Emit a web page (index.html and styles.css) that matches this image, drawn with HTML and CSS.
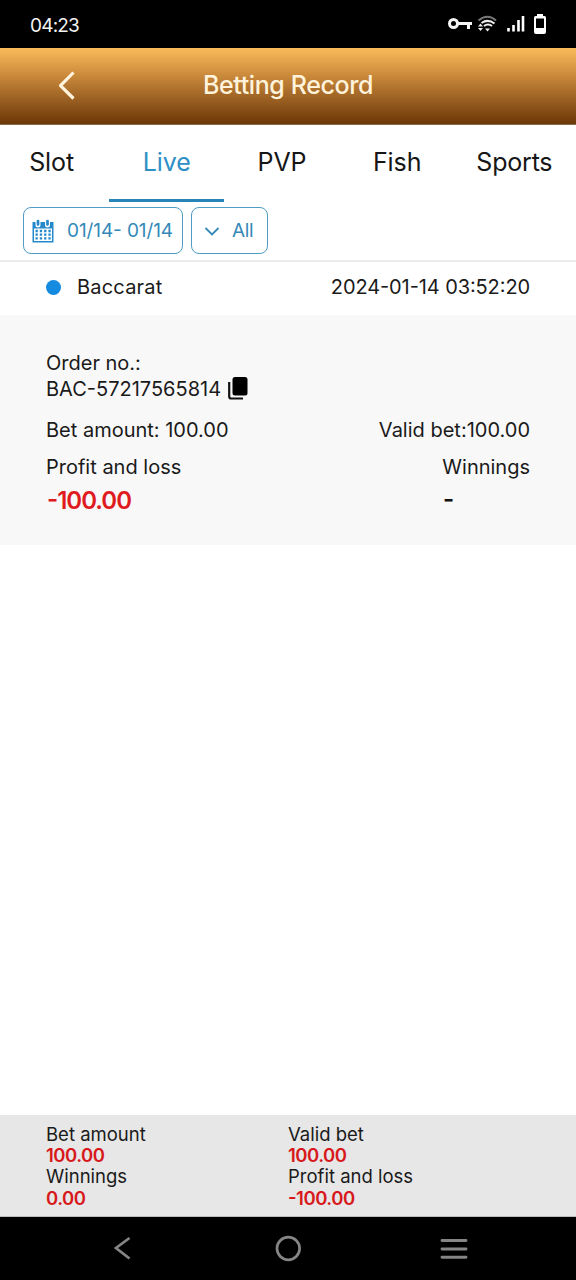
FILE: index.html
```html
<!DOCTYPE html>
<html lang="en">
<head>
<meta charset="utf-8">
<title>Betting Record</title>
<link rel="stylesheet" href="styles.css">
</head>
<body>
<div class="phone">
  <div class="status">
    <span class="clock">04:23</span>
    <svg class="status-icons" width="102" height="24" viewBox="446 12 102 24">
      <circle cx="453.500" cy="23.500" r="4" fill="none" stroke="#f4f4f4" stroke-width="3"/>
      <path d="M457 23.500H472M468.500 23.500V29" fill="none" stroke="#f4f4f4" stroke-width="3"/>
      <path d="M478.500 20.500Q487.500 13 496 20.500" fill="none" stroke="#777" stroke-width="2"/>
      <path d="M481.500 23Q488 18.500 494.500 23.500M484 26Q488 23 492 26" fill="none" stroke="#eee" stroke-width="2"/>
      <path d="M485 28.500h5l-2.500 3zM478 26.500l2.500-3 2.500 3zM478 28h5l-2.500 3z" fill="#eee"/>
      <path d="M508.500 28v3.500M513.500 25v6.500M518.500 20v11.500M523 16v15.500" fill="none" stroke="#fff" stroke-width="2.600"/>
      <path fill-rule="evenodd" d="M537 14h6v2h1.500q1.500 0 1.500 1.500V32q0 2-2 2h-8q-2 0-2-2V17.500q0-1.500 1.500-1.500H537zM536 18.500V28h8V18.500z" fill="#fff"/>
    </svg>
  </div>
  <header class="header">
    <svg class="back" width="20" height="32" viewBox="0 0 20 32"><path d="M16.500 2.500L3.500 15.700L16.500 28.500" fill="none" stroke="#fff3dc" stroke-width="3.200" stroke-linejoin="round"/></svg>
    <h1 class="title">Betting Record</h1>
  </header>
  <nav class="tabs">
    <span class="tab">Slot</span>
    <span class="tab active">Live</span>
    <span class="tab">PVP</span>
    <span class="tab">Fish</span>
    <span class="tab">Sports</span>
  </nav>
  <div class="filters">
    <div class="chip date">
      <svg width="22" height="24" viewBox="0 0 22 24">
        <path d="M.5 3H21.500V23.500H.5z" fill="#2488cb"/>
        <path d="M2 9.500H20V22H2z" fill="#fff"/>
        <path d="M3.500 12H19M3.500 15.700H19M3.500 19.400H19" stroke="#2488cb" stroke-width="2.300" stroke-dasharray="2.300 2"/>
        <path d="M6 1v5M15.500 1v5" stroke="#fff" stroke-width="5" stroke-linecap="round"/>
        <path d="M6 2v3.500M15.500 2v3.500" stroke="#2488cb" stroke-width="2.700" stroke-linecap="round"/>
      </svg>
      <span class="date-text">01/14<span class="case">-</span> 01/14</span>
    </div>
    <div class="chip kind">
      <svg width="16" height="10" viewBox="0 0 16 10"><path d="M1.500 2L8 8.500L14.500 2" fill="none" stroke="#3489b8" stroke-width="1.800"/></svg>
      <span class="kind-text">All</span>
    </div>
  </div>
  <div class="record-head">
    <span class="dot"></span>
    <span class="game">Baccarat</span>
    <span class="time case">2024-01-14 03:52:20</span>
  </div>
  <section class="record">
    <div class="order-label">Order no.:</div>
    <div class="order">
      <span class="case">BAC-57217565814</span>
      <svg width="20" height="24" viewBox="0 0 20 24"><rect x="4.500" y="0" width="15" height="18.500" rx="2.500" fill="#000"/><path d="M1.200 5v14.500q0 2 2 2H15" fill="none" stroke="#111" stroke-width="2.200"/></svg>
    </div>
    <div class="row amounts"><span>Bet amount: 100.00</span><span class="valid">Valid bet:100.00</span></div>
    <div class="row labels"><span>Profit and loss</span><span>Winnings</span></div>
    <div class="row values"><span class="loss case">-100.00</span><span class="none case">-</span></div>
  </section>
  <main class="empty"></main>
  <footer class="totals">
    <div class="total"><span>Bet amount</span><b>100.00</b><span>Winnings</span><b>0.00</b></div>
    <div class="total"><span>Valid bet</span><b>100.00</b><span>Profit and loss</span><b class="case">-100.00</b></div>
  </footer>
  <div class="navbar">
    <svg width="576" height="63" viewBox="0 1217 576 63" fill="none" stroke="#858585">
      <path d="M129.500 1238L116 1248L129.500 1258.500" stroke-width="2.700"/>
      <circle cx="288.300" cy="1248.500" r="11.300" stroke-width="2.700"/>
      <path d="M442 1240.500H466M442 1249H466M442 1257.300H466" stroke-width="2.900" stroke-linecap="round"/>
    </svg>
  </div>
</div>
</body>
</html>
```
FILE: styles.css
```css
* { box-sizing: border-box; }
body { margin: 0; background: #fff; }
.phone {
  width: 576px; height: 1280px;
  display: flex; flex-direction: column;
  font-family: Inter, Roboto, "Liberation Sans", sans-serif;
  font-size: 20px; font-weight: 380; letter-spacing: 0; color: #1a1a1a; white-space: nowrap;
}
.case { font-feature-settings: "case" 1; }
.status {
  height: 48px; background: #000; color: #f2f2f2;
  display: flex; align-items: center; justify-content: space-between;
  padding: 2px 28px 0 30px;
}
.status-icons { margin-top: -2px; }
.clock { font-size: 19px; font-weight: 400; letter-spacing: -0.8px; }
.header {
  height: 77px; display: grid; grid-template-columns: 130px 1fr 130px; align-items: center;
  background: linear-gradient(#fabb5b, #d39240 30%, #9a5f22 68%, #6c3807);
  border-bottom: 1px solid #8a6a4c;
}
.back { margin-left: 57px; }
.title {
  margin: -2px 0 0; text-align: center; font-size: 25px; font-weight: 550;
  letter-spacing: -0.4px; color: #fff3dc;
}
.tabs {
  height: 77px; display: grid; grid-template-columns: repeat(5, 115.2px);
  margin-left: -6px; font-size: 25px; color: #161616; flex: none;
}
.tab { text-align: center; line-height: 74px; border-bottom: 3px solid transparent; letter-spacing: -0.1px; }
.tab:last-child { padding-left: 4px; letter-spacing: -0.2px; }
.tab.active { color: #2e8fc6; border-color: #2684b8; }
.filters {
  height: 60px; display: flex; gap: 8px; padding: 5px 0 0 23px;
  border-bottom: 2px solid #ededed;
}
.chip {
  height: 47px; border: 1px solid #4f9dc4; border-radius: 8px; color: #3489b8;
  display: flex; align-items: center; font-size: 19px; letter-spacing: -0.1px;
}
.date { width: 160px; padding-left: 8px; gap: 13px; }
.kind { width: 77px; padding-left: 12px; gap: 12px; }
.kind-text { letter-spacing: -0.4px; }
.record-head { height: 53px; display: flex; align-items: center; padding: 0 46px 3px; }
.dot { width: 15px; height: 15px; border-radius: 50%; background: #148be0; margin-right: 16px; }
.game { letter-spacing: 0.2px; }
.time { margin-left: auto; letter-spacing: -0.1px; }
.record {
  height: 230px; background: #f8f8f8; padding: 35px 46px 0;
  display: flex; flex-direction: column;
}
.order-label { line-height: 26px; }
.order { display: flex; align-items: center; gap: 7px; line-height: 26px; }
.row { display: flex; justify-content: space-between; line-height: 28px; }
.amounts { margin-top: 14px; }
.labels { margin-top: 9px; }
.values { font-size: 24px; font-weight: 600; margin-top: 6px; }
.loss { color: #e01b1d; letter-spacing: -1px; padding-left: 1px; }
.none { width: 87px; color: #111; }
.empty { flex: 1; }
.totals {
  height: 102px; background: #e7e7e7; border-bottom: 1px solid #bcbcbc;
  display: grid; grid-template-columns: 242px 242px; padding: 9px 46px 0;
  font-size: 18.500px; line-height: 21.200px;
}
.total { display: flex; flex-direction: column; align-items: flex-start; }
.total b { color: #d8191c; font-weight: 600; letter-spacing: -0.5px; }
.navbar { height: 63px; background: #000; }
```
